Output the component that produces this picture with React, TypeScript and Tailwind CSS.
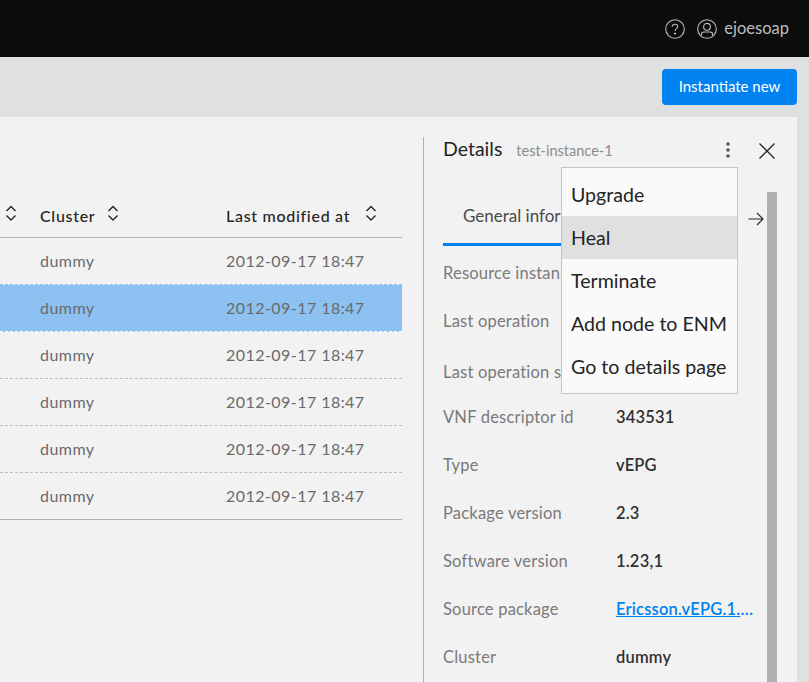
const font = { fontFamily: '"Lato", "Noto Sans", sans-serif' };

const dummyRows = [0, 1, 2, 3, 4, 5];

const details = [
  { label: "Resource instance name", value: "", h: "h-[48px]" },
  { label: "Last operation", value: "", h: "h-[51px]" },
  { label: "Last operation state", value: "", h: "h-[45px]" },
  { label: "VNF descriptor id", value: "343531", h: "h-[48px]" },
  { label: "Type", value: "vEPG", h: "h-[48px]" },
  { label: "Package version", value: "2.3", h: "h-[48px]" },
  { label: "Software version", value: "1.23,1", h: "h-[48px]" },
  { label: "Source package", value: "Ericsson.vEPG.1.23.1.zip", h: "h-[48px]", link: true },
  { label: "Cluster", value: "dummy", h: "h-[48px]" },
];

const menuItems = ["Upgrade", "Heal", "Terminate", "Add node to ENM", "Go to details page"];

const SortIcon = ({ className }: { className?: string }) => (
  <svg className={className} width="12" height="16" viewBox="0 0 12 16" fill="none" stroke="#242424" strokeWidth="1.4">
    <path d="M1.5 6 L6 1.5 L10.5 6" />
    <path d="M1.5 10.5 L6 15 L10.5 10.5" />
  </svg>
);

const HelpIcon = () => (
  <svg width="20" height="20" viewBox="0 0 20 20" fill="none" stroke="#bdbdbd" strokeWidth="1.1">
    <circle cx="10" cy="10" r="9.3" />
    <path d="M7.2 7.8 C7.2 5.9 8.6 5.2 10 5.2 C11.6 5.2 12.8 6.2 12.8 7.6 C12.8 9.6 10 9.6 10 12" />
    <circle cx="10" cy="14.6" r="0.5" fill="#bdbdbd" />
  </svg>
);

const UserIcon = () => (
  <svg width="20" height="20" viewBox="0 0 20 20" fill="none" stroke="#bdbdbd" strokeWidth="1.1">
    <circle cx="10" cy="10" r="9.3" />
    <circle cx="10" cy="7.8" r="3.4" />
    <path d="M4.4 16.6 V15.2 C4.4 13.6 5.6 13 7 13 H13 C14.4 13 15.6 13.6 15.6 15.2 V16.6" />
  </svg>
);

export default function App() {
  return (
    <div className="h-[682px] w-[809px] overflow-hidden bg-[#e0e0e0] flex flex-col" style={font}>
      <header className="h-[57px] bg-[#0c0c0c] flex items-center justify-end gap-[12px] pr-[20px] shrink-0">
        <HelpIcon />
        <div className="flex items-center gap-[7px] text-[#bdbdbd] text-[16.5px]">
          <UserIcon />
          <span>ejoesoap</span>
        </div>
      </header>

      <div className="h-[60px] flex items-start justify-end pt-[12px] pr-[12px] shrink-0">
        <button className="h-[36px] w-[135px] rounded-[4px] bg-[#0082f0] text-white text-[15px] pb-[2px]">
          Instantiate new
        </button>
      </div>

      <main className="relative flex-1 mr-[12px] bg-[#f2f2f2] flex pt-[20px] min-h-0">
        <section className="w-[423px] shrink-0 pr-[21px] pt-[54px]">
          <div className="h-[47px] flex items-center border-b border-[#b0b0b0] pt-[4px] text-[16px] tracking-[0.7px] font-medium text-[#242424]">
            <SortIcon className="ml-[5px] mr-[23px] shrink-0 mb-[6px]" />
            <div className="w-[186px] flex items-center">
              Cluster
              <SortIcon className="ml-[12px] mb-[6px]" />
            </div>
            <div className="flex items-center">
              Last modified at
              <SortIcon className="ml-[15px] mb-[6px]" />
            </div>
          </div>
          <div className="border-b border-[#b0b0b0]">
            {dummyRows.map((i) => (
              <div
                key={i}
                className={`h-[47px] flex items-center pl-[40px] text-[16px] tracking-[0.45px] text-[#6a6a6a] border-b border-dashed last:h-[46px] last:border-b-0 ${
                  i === 1 ? "bg-[#8cc1f2] text-[#4a5560] border-[#ffffff]" : i === 0 ? "border-[#8cc1f2]" : "border-[#bdbdbd]"
                }`}
              >
                <span className="w-[186px]">dummy</span>
                <span>2012-09-17 18:47</span>
              </div>
            ))}
          </div>
        </section>

        <section className="relative flex-1 border-l border-[#b0b0b0] pl-[19px] pr-[20px] min-w-0">
          <div className="h-[24px] flex items-center">
            <span className="text-[19.5px] text-[#242424]">Details</span>
            <span className="ml-[14px] mt-[3px] text-[14.5px] text-[#8c8c8c]">test-instance-1</span>
            <svg className="ml-auto mr-[27px] mt-[2px]" width="6" height="16" viewBox="0 0 6 16" fill="#5a5a5a">
              <circle cx="3" cy="2" r="1.8" />
              <circle cx="3" cy="8" r="1.8" />
              <circle cx="3" cy="14" r="1.8" />
            </svg>
            <svg className="mr-[1px] mt-[3px]" width="18" height="18" viewBox="0 0 18 18" fill="none" stroke="#242424" strokeWidth="1.3">
              <path d="M1.5 1.5 L16.5 16.5 M16.5 1.5 L1.5 16.5" />
            </svg>
          </div>

          <div className="flex mt-[31px]">
            <div className="flex-1 min-w-0">
              <div className="h-[55px] w-[293px] relative">
                <div className="h-[54px] border-b-[3px] border-[#0082f0] w-[118px] pl-[20px] pt-[11px] text-[17px] text-[#4a4a4a] whitespace-nowrap">
                  General information
                </div>
                <svg className="absolute left-[305px] top-[20px]" width="16" height="14" viewBox="0 0 16 14" fill="none" stroke="#242424" strokeWidth="1.1">
                  <path d="M0.5 7 H15 M9 1 L15 7 L9 13" />
                </svg>
              </div>
              <div className="mt-[1px]">
                {details.map((d) => (
                  <div key={d.label} className={`${d.h} flex items-start pt-[13px] text-[16.5px] tracking-[0.2px] whitespace-nowrap`}>
                    <span className="w-[173px] text-[#7a7a7a]">{d.label}</span>
                    {d.link ? (
                      <span className="w-[141px] truncate font-semibold text-[#0082f0] underline">{d.value}</span>
                    ) : (
                      <span className="font-semibold text-[#303030]">{d.value}</span>
                    )}
                  </div>
                ))}
              </div>
            </div>
            <div className="absolute left-[343px] top-[55px] w-[10px] h-[600px] bg-[#b0b0b0]" />
          </div>

          <div className="absolute left-[137px] top-[30px] w-[177px] h-[227px] bg-[#fafafa] border border-[#c4c4c4] pt-[5px] z-10">
            {menuItems.map((m) => (
              <div
                key={m}
                className={`h-[43px] w-[175px] flex items-center pl-[9px] text-[19.6px] text-[#242424] whitespace-nowrap ${
                  m === "Heal" ? "bg-[#e0e0e0]" : ""
                }`}
              >
                {m}
              </div>
            ))}
          </div>
        </section>
      </main>
    </div>
  );
}
